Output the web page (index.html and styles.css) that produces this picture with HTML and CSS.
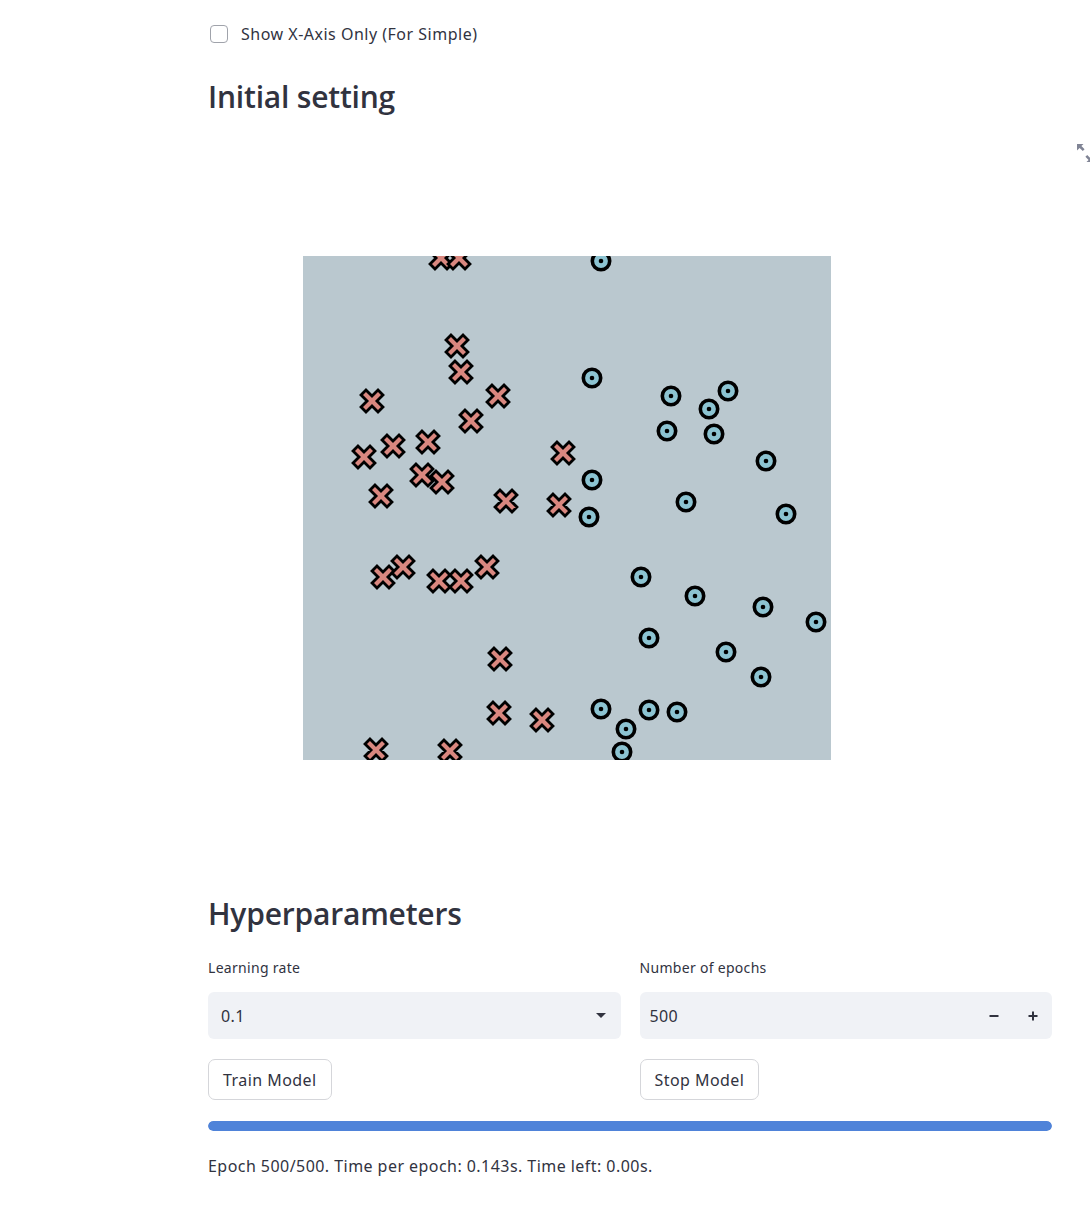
FILE: index.html
```html
<!DOCTYPE html>
<html>
<head>
<meta charset="utf-8">
<link rel="stylesheet" href="styles.css">
</head>
<body>
<div class="main">
  <label class="checkrow">
    <span class="checkbox"></span>
    <span class="checktext">Show X-Axis Only (For Simple)</span>
  </label>

  <h2 class="heading heading-first">Initial setting</h2>

  <div class="figure">
    <svg class="plot" width="844" height="760" viewBox="0 0 844 760">
      <defs>
        <clipPath id="axclip"><rect x="0" y="0" width="528" height="504"/></clipPath>
        <g id="xm">
          <path d="M-10.96,-6.01 L-6.01,-10.96 L0,-4.95 L6.01,-10.96 L10.96,-6.01 L4.95,0 L10.96,6.01 L6.01,10.96 L0,4.95 L-6.01,10.96 L-10.96,6.01 L-4.95,0 Z" fill="#d9877f" stroke="#000" stroke-width="2.8" stroke-linejoin="miter"/>
        </g>
        <g id="om">
          <circle r="8.7" fill="#8cc3d1" stroke="#000" stroke-width="3.6"/>
          <circle r="2.3" fill="#000"/>
        </g>
      </defs>
      <g transform="translate(95,133)">
        <rect x="0" y="0" width="528" height="504" fill="#bac8cf"/>
        <g clip-path="url(#axclip)">
          <use href="#xm" x="138" y="2"/>
          <use href="#xm" x="156" y="2"/>
          <use href="#xm" x="154" y="90"/>
          <use href="#xm" x="158" y="116"/>
          <use href="#xm" x="69" y="145"/>
          <use href="#xm" x="195" y="140"/>
          <use href="#xm" x="168" y="165"/>
          <use href="#xm" x="61" y="201"/>
          <use href="#xm" x="90" y="190"/>
          <use href="#xm" x="125" y="186"/>
          <use href="#xm" x="119" y="219"/>
          <use href="#xm" x="139" y="226"/>
          <use href="#xm" x="260" y="197"/>
          <use href="#xm" x="78" y="240"/>
          <use href="#xm" x="203" y="245"/>
          <use href="#xm" x="256" y="249"/>
          <use href="#xm" x="80" y="321"/>
          <use href="#xm" x="100" y="311"/>
          <use href="#xm" x="136" y="325"/>
          <use href="#xm" x="158" y="325"/>
          <use href="#xm" x="184" y="311"/>
          <use href="#xm" x="197" y="403"/>
          <use href="#xm" x="196" y="457"/>
          <use href="#xm" x="239" y="464"/>
          <use href="#xm" x="73" y="494"/>
          <use href="#xm" x="147" y="495"/>

          <use href="#om" x="298" y="5"/>
          <use href="#om" x="289" y="122"/>
          <use href="#om" x="368" y="140"/>
          <use href="#om" x="425" y="135"/>
          <use href="#om" x="406" y="153"/>
          <use href="#om" x="364" y="175"/>
          <use href="#om" x="411" y="178"/>
          <use href="#om" x="463" y="205"/>
          <use href="#om" x="289" y="224"/>
          <use href="#om" x="383" y="246"/>
          <use href="#om" x="286" y="261"/>
          <use href="#om" x="483" y="258"/>
          <use href="#om" x="338" y="321"/>
          <use href="#om" x="392" y="340"/>
          <use href="#om" x="460" y="351"/>
          <use href="#om" x="513" y="366"/>
          <use href="#om" x="346" y="382"/>
          <use href="#om" x="423" y="396"/>
          <use href="#om" x="458" y="421"/>
          <use href="#om" x="298" y="453"/>
          <use href="#om" x="346" y="454"/>
          <use href="#om" x="374" y="456"/>
          <use href="#om" x="323" y="473"/>
          <use href="#om" x="319" y="496"/>
        </g>
      </g>
    </svg>
    <button class="expand" aria-label="View fullscreen">
      <svg width="18" height="20" viewBox="0 0 18 20">
        <path d="M1,1 L7.5,1 L5.4,3.1 L8.6,6.3 L6.8,8.1 L3.6,4.9 L1,7.5 Z" fill="#808495"/>
        <path d="M17,19 L10.5,19 L12.6,16.9 L9.4,13.7 L11.2,11.9 L14.4,15.1 L17,12.5 Z" fill="#808495"/>
      </svg>
    </button>
  </div>

  <h2 class="heading">Hyperparameters</h2>

  <div class="cols">
    <div class="col">
      <div class="label">Learning rate</div>
      <div class="select">
        <span>0.1</span>
        <svg class="caret" width="10" height="6" viewBox="0 0 10 6"><path d="M0,0 L10,0 L5,5 Z" fill="#31333f"/></svg>
      </div>
      <button class="btn">Train Model</button>
    </div>
    <div class="col">
      <div class="label">Number of epochs</div>
      <div class="numinput">
        <span class="numval">500</span>
        <span class="step">
          <svg width="10" height="10" viewBox="0 0 10 10"><rect x="0.5" y="4" width="9" height="2" fill="#31333f"/></svg>
        </span>
        <span class="step">
          <svg width="10" height="10" viewBox="0 0 10 10"><rect x="0.5" y="4" width="9" height="2" fill="#31333f"/><rect x="4" y="0.5" width="2" height="9" fill="#31333f"/></svg>
        </span>
      </div>
      <button class="btn">Stop Model</button>
    </div>
  </div>

  <div class="progress"><div class="bar" style="width:100%"></div></div>

  <p class="status">Epoch 500/500. Time per epoch: 0.143s. Time left: 0.00s.</p>
</div>
</body>
</html>
```

FILE: styles.css
```css
html, body {
  margin: 0;
  padding: 0;
  background: #ffffff;
}

body {
  font-family: "Noto Sans", "Open Sans", sans-serif;
  color: #31333f;
  width: 1090px;
  overflow: hidden;
}

.main {
  width: 844px;
  margin-left: 208px;
  padding-top: 22px;
}

.checkrow {
  display: flex;
  align-items: center;
  gap: 13px;
  height: 24px;
  font-size: 16px;
  cursor: pointer;
}

.checkbox {
  box-sizing: border-box;
  width: 18px;
  height: 18px;
  margin-left: 2px;
  border: 1px solid #a0a3ab;
  border-radius: 4px;
  background: #fff;
}

.checktext {
  color: #31333f;
  letter-spacing: 0.5px;
}

.heading {
  font-family: "Open Sans", "Noto Sans", sans-serif;
  font-size: 30px;
  font-weight: 600;
  line-height: 40px;
  margin: 0;
  color: #31333f;
  letter-spacing: -0.2px;
}

.heading-first {
  margin-top: 31px;
}

.figure {
  position: relative;
  height: 771px;
  margin-top: 6px;
}

.plot {
  display: block;
}

.expand {
  position: absolute;
  left: 866px;
  top: 19px;
  width: 22px;
  height: 22px;
  padding: 1px 2px;
  border: 0;
  background: transparent;
}

.expand svg {
  display: block;
}

.cols {
  display: flex;
  gap: 19px;
  margin-top: 24px;
}

.col {
  flex: 1 1 0;
  display: flex;
  flex-direction: column;
  align-items: flex-start;
}

.label {
  font-size: 14px;
  line-height: 20px;
  height: 20px;
  margin-bottom: 14px;
  letter-spacing: 0.3px;
}

.select, .numinput {
  box-sizing: border-box;
  width: 100%;
  height: 47px;
  background: #f0f2f6;
  border-radius: 6px;
  display: flex;
  align-items: center;
  font-size: 16px;
  letter-spacing: 0.4px;
}

.select {
  justify-content: space-between;
  padding: 0 15px 0 13px;
}

.caret {
  display: block;
}

.numinput {
  padding: 0 0 0 10px;
}

.numval {
  flex: 1;
}

.step {
  width: 39px;
  height: 100%;
  display: flex;
  align-items: center;
  justify-content: center;
}

.btn {
  margin-top: 20px;
  height: 41px;
  padding: 0 14px;
  font-family: inherit;
  font-size: 16px;
  letter-spacing: 0.45px;
  color: #31333f;
  background: #fff;
  border: 1px solid #d5d6da;
  border-radius: 7px;
}

.progress {
  margin-top: 21px;
  height: 10px;
  border-radius: 5px;
  background: #f0f2f6;
  overflow: hidden;
}

.bar {
  height: 100%;
  background: #4f83d9;
  border-radius: 5px;
}

.status {
  margin: 23px 0 0;
  font-size: 16px;
  line-height: 24px;
  letter-spacing: 0.45px;
}
```
